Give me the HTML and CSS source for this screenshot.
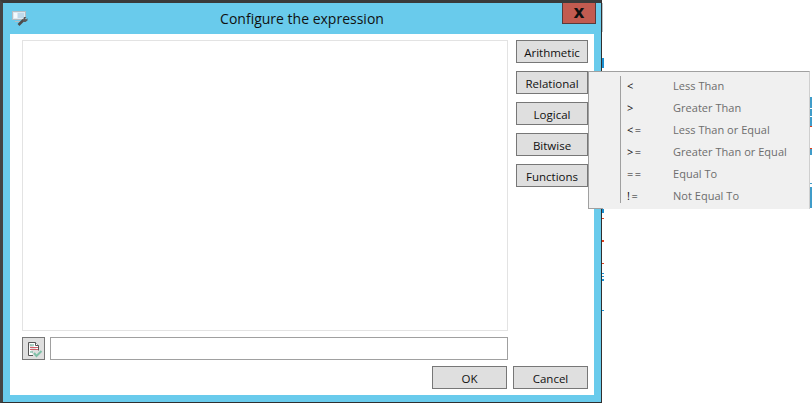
FILE: index.html
```html
<!DOCTYPE html>
<html lang="en">
<head>
<meta charset="utf-8">
<title>Configure the expression</title>
<link rel="stylesheet" href="styles.css">
</head>
<body>
<svg class="slivers" width="812" height="403" viewBox="0 0 812 403">
  <g fill="#1b8fd0">
    <rect x="602" y="58" width="2" height="10"/>
    <rect x="602" y="209" width="2" height="4"/>
    <rect x="602" y="273" width="2" height="1"/>
    <rect x="602" y="276" width="2" height="1"/>
    <rect x="602" y="279" width="2" height="2"/>
    <rect x="602" y="310" width="2" height="1"/>
  </g>
  <g fill="#e0401f">
    <rect x="602" y="218" width="2" height="1"/>
    <rect x="602" y="240" width="2" height="2"/>
    <rect x="602" y="263" width="2" height="1"/>
    <rect x="810" y="126" width="2" height="1"/>
    <rect x="810" y="148" width="2" height="1"/>
  </g>
  <g fill="#3f9cc9">
    <rect x="810" y="97" width="2" height="11"/>
    <rect x="810" y="109" width="2" height="7"/>
    <rect x="810" y="117" width="2" height="9"/>
    <rect x="810" y="149" width="2" height="6"/>
    <rect x="810" y="183" width="2" height="1"/>
    <rect x="810" y="187" width="2" height="21"/>
  </g>
  <rect x="602" y="3" width="1" height="29" fill="#b8c4ca"/>
</svg>
<div class="window">
  <div class="titlebar">
    <svg class="app-icon" width="17" height="17" viewBox="0 0 17 17">
      <rect x="0.500" y="0.500" width="13" height="8" fill="#dbe9f2" stroke="#b4bdc3"/>
      <rect x="2" y="2" width="3" height="5" fill="#f4f9fc"/>
      <rect x="6" y="2" width="6" height="5" fill="#bfd9ea"/>
      <path d="M3 10h8v1H3z" fill="#b4bdc3"/>
      <path d="M6.500 14l5-5" stroke="#4c4c4c" stroke-width="2.600" fill="none"/>
      <path d="M11 9l1-3h2.500l-1.500 1.500 1 1 1.500-1.200v2.200l-2 1.500h-2z" fill="#5a5a5a"/>
    </svg>
    <span class="title">Configure the expression</span>
    <button class="close" type="button">x</button>
  </div>
  <div class="client">
    <div class="upper">
      <div class="editor"></div>
      <div class="side">
        <button class="btn" type="button">Arithmetic</button>
        <button class="btn" type="button">Relational</button>
        <button class="btn" type="button">Logical</button>
        <button class="btn" type="button">Bitwise</button>
        <button class="btn" type="button">Functions</button>
      </div>
    </div>
    <div class="input-row">
      <button class="icon-btn" type="button">
        <svg width="18" height="18" viewBox="0 0 18 18">
          <path d="M3.500 2.500h7l3 3v5M8 15.500H3.500v-13" fill="#fff" stroke="#555"/>
          <path d="M10.500 2.500v3h3" fill="#fff" stroke="#555"/>
          <path d="M5 5h4" stroke="#5aa98f"/>
          <path d="M5 7.500h8" stroke="#d0606a"/>
          <path d="M5 9.500h8" stroke="#d0606a"/>
          <path d="M5 12h3" stroke="#5aa98f"/>
          <path d="M9 13l2.500 3 5-5" fill="none" stroke="#7fc0a8" stroke-width="2"/>
        </svg>
      </button>
      <div class="expr"></div>
    </div>
    <div class="actions">
      <button class="btn wide" type="button">OK</button>
      <button class="btn wide" type="button">Cancel</button>
    </div>
  </div>
</div>
<div class="menu">
  <div class="item"><span class="op">&lt;</span><span class="label">Less Than</span></div>
  <div class="item"><span class="op">&gt;</span><span class="label">Greater Than</span></div>
  <div class="item"><span class="op">&lt;=</span><span class="label">Less Than or Equal</span></div>
  <div class="item"><span class="op">&gt;=</span><span class="label">Greater Than or Equal</span></div>
  <div class="item"><span class="op">==</span><span class="label">Equal To</span></div>
  <div class="item"><span class="op">!=</span><span class="label">Not Equal To</span></div>
</div>
</body>
</html>
```
FILE: styles.css
```css
* { box-sizing: border-box; }
html, body { margin: 0; padding: 0; background: #fff; }
body { width: 812px; height: 403px; overflow: hidden; font-family: "Open Sans", "Noto Sans", sans-serif; position: relative; }
.slivers { position: absolute; left: 0; top: 0; }
.window {
  position: relative;
  width: 602px; height: 403px;
  background: #69cbec;
  border-top: 3px solid #3a3a3a;
  border-left: 3px solid #444;
  border-right: 1px solid #2f2f2f;
  border-bottom: 1px solid #2f2f2f;
  padding: 0 7px 7px 7px;
  display: flex; flex-direction: column;
}
.titlebar { height: 31px; flex: none; display: flex; position: relative; align-items: center; justify-content: center; }
.app-icon { position: absolute; left: 2px; top: 8px; }
.title { font-size: 14px; color: #111; }
.close {
  position: absolute; right: -2px; top: 0; width: 34px; height: 21px;
  background: #c25b50; border: 1px solid #5a3a3a; border-top: 0; padding: 0 0 1px;
  font: bold 17px "DejaVu Sans", sans-serif; color: #111; line-height: 1;
}
.client { flex: 1; background: #fff; padding: 6px 6px 6px 12px; display: flex; flex-direction: column; }
.upper { display: flex; gap: 8px; height: 291px; flex: none; }
.editor { width: 486px; border: 1px solid #e3e3e3; }
.side { display: flex; flex-direction: column; gap: 8px; }
.btn {
  width: 72px; height: 23px; background: #dfdfdf; border: 1px solid #777;
  font: 11.5px "Open Sans", "Noto Sans", sans-serif; color: #111; padding: 1px 0 0;
}
.input-row { display: flex; gap: 5px; margin-top: 6px; height: 23px; flex: none; }
.icon-btn { width: 23px; height: 23px; background: #dfdfdf; border: 1px solid #777; padding: 0; display: flex; align-items: center; justify-content: center; }
.expr { width: 458px; border: 1px solid #a0a0a0; }
.actions { display: flex; justify-content: flex-end; gap: 6px; margin-top: 6px; }
.actions .wide { width: 75px; }
.menu {
  position: absolute; left: 588px; top: 71px; width: 222px; height: 138px;
  background: #f0f0f0; border-top: 1px solid #a0a0a0; border-left: 1px solid #a0a0a0; border-right: 1px solid #cfcfcf;
  padding: 2px 0 0 31px; font-size: 11px; color: #6d6d6d;
}
.menu::before { content: ""; position: absolute; left: 31px; top: 4px; bottom: 6px; width: 1px; background: #a0a0a0; }
.menu::after { content: ""; position: absolute; left: -1px; bottom: 0; width: 15px; height: 1px; background: #a0a0a0; }
.item { height: 22px; display: flex; align-items: center; }
.op { width: 53px; padding-left: 7px; color: #111; letter-spacing: 1.5px; }
.label { white-space: nowrap; letter-spacing: 0.03px; }
```
